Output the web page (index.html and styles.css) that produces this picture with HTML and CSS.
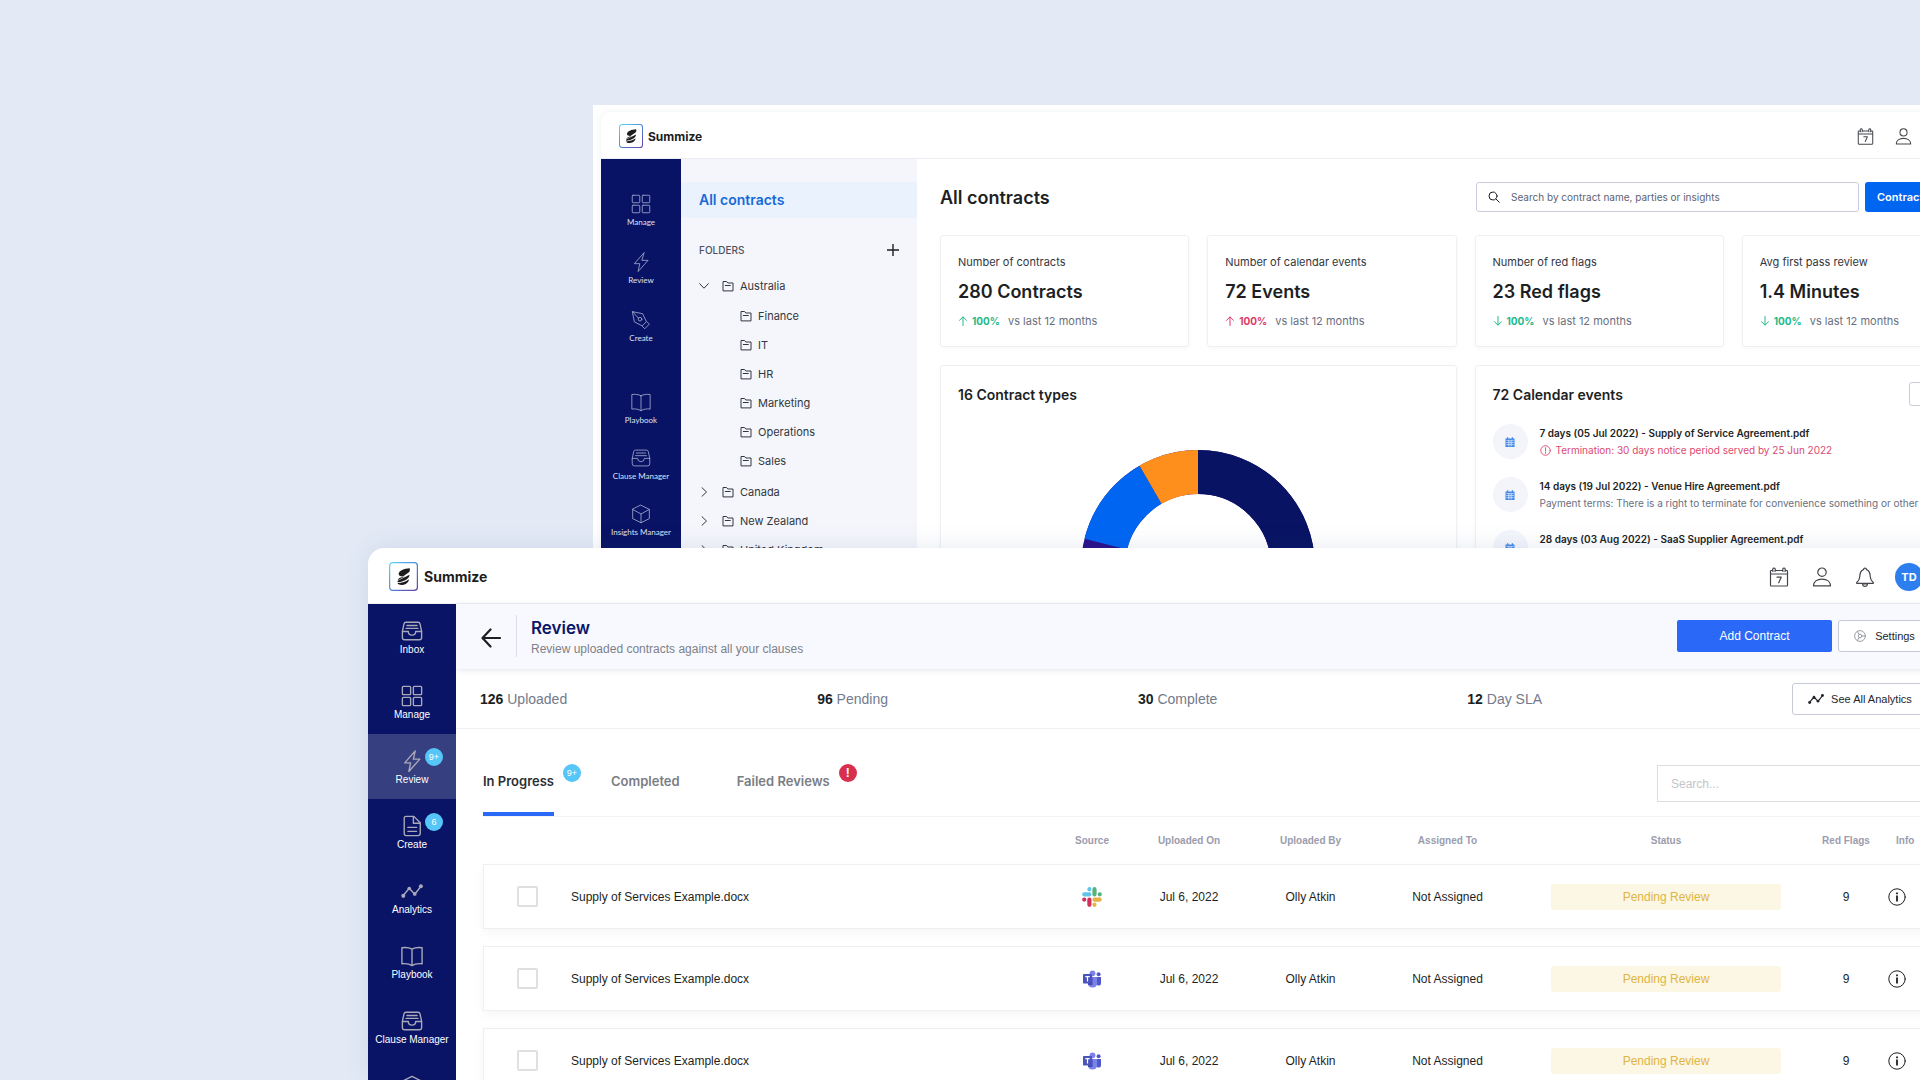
FILE: index.html
```
<!DOCTYPE html>
<html lang="en">
<head>
<meta charset="utf-8">
<title>Summize</title>
<link rel="stylesheet" href="styles.css">
</head>
<body>
<svg class="sprite" aria-hidden="true">
  <defs>
    <linearGradient id="brand" x1="0" y1="0" x2="1" y2="1">
      <stop offset="0" stop-color="#5fd8f5"/><stop offset=".5" stop-color="#4a8ad8"/><stop offset="1" stop-color="#6a3fa8"/>
    </linearGradient>
    <symbol id="i-logo" viewBox="0 0 28 28">
      <rect x=".6" y=".6" width="26.8" height="26.8" rx="3" fill="#fff" stroke="url(#brand)" stroke-width="1.2"/>
      <path fill="#1d1d1d" d="M20 6C14.500 6.300 9.800 8.200 9.300 11.400C9.100 13.300 11 13.900 13.400 14.100L19.600 9.600C20.200 8.800 20.300 7.300 20 6ZM19.900 12.200L8.400 18.200C8.200 18.800 8.200 19.300 8.400 19.600C12.500 19 19.600 17.200 19.900 12.200ZM14.500 14.300C11.500 14.700 8.900 15.600 8.500 17.600L15.800 13.800ZM19.300 16.700C16.800 18.900 12.500 20.200 8.200 20.300C8.800 21.700 10.600 22.300 12.800 22.200C16 22 19 20 19.300 16.700Z"/>
    </symbol>
    <symbol id="i-grid" viewBox="0 0 24 24"><g class="line"><rect x="1.500" y="1.500" width="9" height="9" rx="1"/><rect x="13.500" y="1.500" width="9" height="9" rx="1"/><rect x="1.500" y="13.500" width="9" height="9" rx="1"/><rect x="13.500" y="13.500" width="9" height="9" rx="1"/></g></symbol>
    <symbol id="i-bolt" viewBox="0 0 24 24"><path class="line" d="M15.500 1L4 14h6.500L8.500 23.500L20.500 10h-7z"/></symbol>
    <symbol id="i-pen" viewBox="0 0 24 24"><g class="line"><path d="M2 2l12 2.500 4.500 9.500-5 5L4.500 14.500z"/><path d="M2 2l7 8"/><circle cx="10.800" cy="11" r="2.200"/><path d="M19 14l3 3-5.500 5.500-3-3"/></g></symbol>
    <symbol id="i-book" viewBox="0 0 24 24"><path class="line" d="M12 4.500C9 2.800 5 2.500 1 3v17.500c4-.6 8 0 11 2 3-2 7-2.600 11-2V3c-4-.5-8-.2-11 1.500zM12 4.500v18"/></symbol>
    <symbol id="i-inbox" viewBox="0 0 24 24"><g class="line"><path d="M1.500 12.500L3.200 4.500Q3.600 2.500 5.500 2.500h13Q20.400 2.500 20.800 4.500l1.700 8V19q0 2.500-2.500 2.500H4Q1.500 21.500 1.500 19zM1.500 12.500H8q0 4 4 4t4-4h6.500"/><path d="M6.500 6h11M5.500 9.200h13"/></g></symbol>
    <symbol id="i-cube" viewBox="0 0 24 24"><path class="line" d="M12 1.500l10 5v11l-10 5-10-5v-11zM2 6.500l10 5.500 10-5.500M12 12v10.500"/></symbol>
    <symbol id="i-doc" viewBox="0 0 24 24"><path class="line" d="M5.500 1.500h8.500l7 7V20q0 2.500-2.500 2.500h-13Q3.500 22.500 3.500 20V3.500q0-2 2-2zM13.500 1.500V9H21M7.500 13.500h9.500M7.500 17.800h9.500"/></symbol>
    <symbol id="i-trend" viewBox="0 0 24 24"><path class="line" d="M2 17.500L9 9l6 6.500 7-9"/><g fill="currentColor"><circle cx="2.500" cy="17.300" r="2.200"/><circle cx="9" cy="9.300" r="2"/><circle cx="15" cy="15.200" r="2"/><circle cx="21.700" cy="6.800" r="2.200"/></g></symbol>
    <symbol id="i-calendar" viewBox="0 0 20 20"><path class="line" d="M3.500 3.500H2.200Q1.500 3.500 1.500 4.200V18.300Q1.500 19 2.200 19H17.800Q18.500 19 18.500 18.300V4.200Q18.500 3.500 17.800 3.500H16.500M6.500 3.500h7M1.500 7h17"/><path class="line" d="M4 4.500q-.8-3.500 1-3.500t1 3.500M14 4.500q-.8-3.500 1-3.500t1 3.500M8 10.200h4.200L9.700 15.800"/></symbol>
    <symbol id="i-user" viewBox="0 0 20 20"><g class="line"><circle cx="10" cy="5.200" r="4.200"/><path d="M1.500 18.800C1.500 14.500 5 12.200 10 12.200s8.500 2.300 8.500 6.600z"/></g></symbol>
    <symbol id="i-bell" viewBox="0 0 20 20"><path class="line" d="M10 1.200q1.400 0 1.500 1.500C15 3.700 15.200 7 15.300 10q.1 3 3 5.500v.8H1.700v-.8q2.900-2.500 3-5.500C4.800 7 5 3.700 8.500 2.700Q8.600 1.200 10 1.200zM7.500 17q.3 2.400 2.500 2.400T12.500 17z"/></symbol>
    <symbol id="i-search" viewBox="0 0 12 12"><g class="line"><circle cx="5" cy="5" r="4"/><path d="M8 8l3.300 3.300"/></g></symbol>
    <symbol id="i-plus" viewBox="0 0 12 12"><path class="line" d="M6 0v12M0 6h12"/></symbol>
    <symbol id="i-down" viewBox="0 0 10 10"><path class="line" d="M.7 2.700L5 7.200l4.300-4.500"/></symbol>
    <symbol id="i-right" viewBox="0 0 10 10"><path class="line" d="M3 .7L7.500 5 3 9.300"/></symbol>
    <symbol id="i-folder" viewBox="0 0 12 12"><path class="line" d="M1 10.500V1.500h3.600l1.200 1.500H11v7.500zM3.300 5.500h5"/></symbol>
    <symbol id="i-up" viewBox="0 0 10 10"><path class="line" d="M5 9.500V1M1.500 4.300L5 .9l3.500 3.400"/></symbol>
    <symbol id="i-drop" viewBox="0 0 10 10"><path class="line" d="M5 .5V9M1.500 5.700L5 9.100l3.500-3.400"/></symbol>
    <symbol id="i-sheet" viewBox="0 0 10 10"><path fill="#3f86e8" d="M.5 1.500H2V.2h1.200v1.300h3.600V.2H8v1.300h1.500V10h-9z"/><path stroke="#d9e7fb" stroke-width=".7" d="M1.200 3.400h7.600M1.200 5.500h7.600M1.200 7.600h7.600M3.400 3.400v6M5 3.400v6M6.700 3.400v6"/></symbol>
    <symbol id="i-alert" viewBox="0 0 12 12"><g class="line"><circle cx="6" cy="6" r="5.200"/><path d="M6 3v3.700M6 8v1"/></g></symbol>
    <symbol id="i-back" viewBox="0 0 20 20"><path class="line" d="M19 10H1.800M9.500 1.500L1.500 10l8 8.500"/></symbol>
    <symbol id="i-gear" viewBox="0 0 14 14"><g class="line"><circle cx="7" cy="7" r="5.400"/><circle cx="7" cy="7" r="1.800"/><path d="M8.800 7h3.600M6.100 8.600L4.300 11.700M6.100 5.400L4.300 2.300"/></g></symbol>
    <symbol id="i-info" viewBox="0 0 18 18"><circle class="line" cx="9" cy="9" r="8.200"/><path fill="none" stroke="currentColor" stroke-width="1.800" d="M9 4.500v1.800M9 7.500v6"/></symbol>
    <symbol id="i-slack" viewBox="0 0 20 20" stroke-width="4.200" stroke-linecap="round">
      <path stroke="#61c5ea" d="M2.200 7.300h5.200M7.400 2.200v.1"/><path stroke="#56b37f" d="M12.500 2.200v5.200M17.700 7.300h.1"/><path stroke="#e5b345" d="M12.500 12.600h5.200M12.500 17.700v.1"/><path stroke="#d3315c" d="M7.400 12.600v5.200M2.200 12.600h.1"/>
    </symbol>
    <symbol id="i-teams" viewBox="0 0 20 18"><circle cx="10.500" cy="3.300" r="2.900" fill="#7b83eb"/><circle cx="16.600" cy="4.200" r="2" fill="#5059c9"/><path fill="#5059c9" d="M14 7h5v6q0 2.600-2.500 2.600T14 13.500z"/><path fill="#7b83eb" d="M6 7h9v6.500q0 4-4.500 4T6 13.500z"/><path fill="#4148ae" d="M5 7h5.500v8H6.200z"/><rect x="1" y="4" width="9" height="9.500" rx=".8" fill="#4b53bc"/><path stroke="#fff" stroke-width="1.200" d="M3.300 6.600h4.400M5.500 6.600v4.900"/></symbol>
  </defs>
</svg>

<div class="window window-back">
  <div class="frame">
    <header class="topbar">
      <a class="brand" href="#"><svg><use href="#i-logo"/></svg>Summize</a>
      <div class="tools">
        <button aria-label="Calendar"><svg><use href="#i-calendar"/></svg></button>
        <button aria-label="Account"><svg><use href="#i-user"/></svg></button>
      </div>
    </header>
    <div class="columns">
      <nav class="rail">
        <div class="rail-group">
          <a href="#"><svg><use href="#i-grid"/></svg>Manage</a>
          <a href="#"><svg><use href="#i-bolt"/></svg>Review</a>
          <a href="#"><svg><use href="#i-pen"/></svg>Create</a>
        </div>
        <div class="rail-group tight">
          <a href="#"><svg><use href="#i-book"/></svg>Playbook</a>
          <a href="#"><svg><use href="#i-inbox"/></svg>Clause Manager</a>
          <a href="#"><svg><use href="#i-cube"/></svg>Insights Manager</a>
        </div>
      </nav>
      <aside class="folders">
        <a class="all" href="#">All contracts</a>
        <div class="folders-head"><h2>Folders</h2><button aria-label="Add folder"><svg><use href="#i-plus"/></svg></button></div>
        <ul class="tree">
          <li><a href="#"><svg class="chev"><use href="#i-down"/></svg><svg><use href="#i-folder"/></svg>Australia</a>
            <ul>
              <li><a href="#"><svg><use href="#i-folder"/></svg>Finance</a></li>
              <li><a href="#"><svg><use href="#i-folder"/></svg>IT</a></li>
              <li><a href="#"><svg><use href="#i-folder"/></svg>HR</a></li>
              <li><a href="#"><svg><use href="#i-folder"/></svg>Marketing</a></li>
              <li><a href="#"><svg><use href="#i-folder"/></svg>Operations</a></li>
              <li><a href="#"><svg><use href="#i-folder"/></svg>Sales</a></li>
            </ul>
          </li>
          <li><a href="#"><svg class="chev"><use href="#i-right"/></svg><svg><use href="#i-folder"/></svg>Canada</a></li>
          <li><a href="#"><svg class="chev"><use href="#i-right"/></svg><svg><use href="#i-folder"/></svg>New Zealand</a></li>
          <li><a href="#"><svg class="chev"><use href="#i-right"/></svg><svg><use href="#i-folder"/></svg>United Kingdom</a></li>
        </ul>
      </aside>
      <main class="dash">
        <div class="dash-head">
          <h1>All contracts</h1>
          <label class="find"><svg><use href="#i-search"/></svg><input type="search" aria-label="Search contracts" placeholder="Search by contract name, parties or insights"></label>
          <button class="primary">Contracts</button>
        </div>
        <div class="cards">
          <section class="card stat"><h3>Number of contracts</h3><strong>280 Contracts</strong><p><svg class="good"><use href="#i-up"/></svg><b class="good">100%</b>vs last 12 months</p></section>
          <section class="card stat"><h3>Number of calendar events</h3><strong>72 Events</strong><p><svg class="bad"><use href="#i-up"/></svg><b class="bad">100%</b>vs last 12 months</p></section>
          <section class="card stat"><h3>Number of red flags</h3><strong>23 Red flags</strong><p><svg class="good"><use href="#i-drop"/></svg><b class="good">100%</b>vs last 12 months</p></section>
          <section class="card stat"><h3>Avg first pass review</h3><strong>1.4 Minutes</strong><p><svg class="good"><use href="#i-drop"/></svg><b class="good">100%</b>vs last 12 months</p></section>
          <section class="card wide">
            <div class="card-head"><h2>16 Contract types</h2></div>
            <svg class="donut" viewBox="0 0 234 234" role="img" aria-label="Contract types">
              <g fill="none" stroke-width="44" transform="rotate(-90 117 117)">
                <circle cx="117" cy="117" r="95" pathLength="360" stroke="#2a118a"/>
                <circle cx="117" cy="117" r="95" pathLength="360" stroke="#081463" stroke-dasharray="150 210"/>
                <circle cx="117" cy="117" r="95" pathLength="360" stroke="#0066f2" stroke-dasharray="46 314" stroke-dashoffset="-284"/>
                <circle cx="117" cy="117" r="95" pathLength="360" stroke="#ff8f1c" stroke-dasharray="30 330" stroke-dashoffset="-330"/>
              </g>
            </svg>
          </section>
          <section class="card wide">
            <div class="card-head"><h2>72 Calendar events</h2><button aria-label="View all"></button></div>
            <ul class="events">
              <li><span class="dot"><svg><use href="#i-sheet"/></svg></span><div><b>7 days (05 Jul 2022) - Supply of Service Agreement.pdf</b><p class="warn"><svg><use href="#i-alert"/></svg>Termination: 30 days notice period served by 25 Jun 2022</p></div></li>
              <li><span class="dot"><svg><use href="#i-sheet"/></svg></span><div><b>14 days (19 Jul 2022) - Venue Hire Agreement.pdf</b><p>Payment terms: There is a right to terminate for convenience something or other</p></div></li>
              <li><span class="dot"><svg><use href="#i-sheet"/></svg></span><div><b>28 days (03 Aug 2022) - SaaS Supplier Agreement.pdf</b></div></li>
            </ul>
          </section>
        </div>
      </main>
    </div>
  </div>
</div>

<div class="window window-front">
  <header class="topbar">
    <a class="brand" href="#"><svg><use href="#i-logo"/></svg>Summize</a>
    <div class="tools">
      <button aria-label="Calendar"><svg><use href="#i-calendar"/></svg></button>
      <button aria-label="Account"><svg><use href="#i-user"/></svg></button>
      <button aria-label="Notifications"><svg><use href="#i-bell"/></svg></button>
      <button class="avatar">TD</button>
    </div>
  </header>
  <div class="columns">
    <nav class="side">
      <a href="#"><svg><use href="#i-inbox"/></svg>Inbox</a>
      <a href="#"><svg><use href="#i-grid"/></svg>Manage</a>
      <a class="active" href="#"><svg><use href="#i-bolt"/></svg>Review<span class="badge">9+</span></a>
      <a href="#"><svg><use href="#i-doc"/></svg>Create<span class="badge">6</span></a>
      <a href="#"><svg><use href="#i-trend"/></svg>Analytics</a>
      <a href="#"><svg><use href="#i-book"/></svg>Playbook</a>
      <a href="#"><svg><use href="#i-inbox"/></svg>Clause Manager</a>
      <a href="#" aria-label="Insights Manager"><svg><use href="#i-cube"/></svg></a>
    </nav>
    <main class="review">
      <div class="page-head">
        <a class="back" href="#" aria-label="Back"><svg><use href="#i-back"/></svg></a>
        <div class="heading"><h1>Review</h1><p>Review uploaded contracts against all your clauses</p></div>
        <button class="add">Add Contract</button>
        <button class="plain settings"><svg><use href="#i-gear"/></svg>Settings</button>
      </div>
      <div class="totals">
        <p><b>126</b> Uploaded</p>
        <p><b>96</b> Pending</p>
        <p><b>30</b> Complete</p>
        <p><b>12</b> Day SLA</p>
        <button class="plain analytics"><svg><use href="#i-trend"/></svg>See All Analytics</button>
      </div>
      <div class="list">
        <div class="bar">
          <div class="tabs">
            <button class="tab current">In Progress<span class="badge">9+</span></button>
            <button class="tab">Completed</button>
            <button class="tab">Failed Reviews<span class="badge red">!</span></button>
          </div>
          <input class="filter" type="search" aria-label="Search reviews" placeholder="Search...">
        </div>
        <table>
          <colgroup><col class="c-check"><col><col class="c-source"><col class="c-on"><col class="c-by"><col class="c-to"><col class="c-status"><col class="c-flags"><col class="c-info"></colgroup>
          <thead><tr><th></th><th></th><th>Source</th><th>Uploaded On</th><th>Uploaded By</th><th>Assigned To</th><th>Status</th><th>Red Flags</th><th class="info">Info</th></tr></thead>
          <tbody>
            <tr><td class="check"><input type="checkbox" aria-label="Select row 1"></td><td class="name">Supply of Services Example.docx</td><td><svg class="src"><use href="#i-slack"/></svg></td><td>Jul 6, 2022</td><td>Olly Atkin</td><td>Not Assigned</td><td><span class="status">Pending Review</span></td><td>9</td><td class="info"><button aria-label="Info"><svg><use href="#i-info"/></svg></button></td></tr>
            <tr><td class="check"><input type="checkbox" aria-label="Select row 2"></td><td class="name">Supply of Services Example.docx</td><td><svg class="src"><use href="#i-teams"/></svg></td><td>Jul 6, 2022</td><td>Olly Atkin</td><td>Not Assigned</td><td><span class="status">Pending Review</span></td><td>9</td><td class="info"><button aria-label="Info"><svg><use href="#i-info"/></svg></button></td></tr>
            <tr><td class="check"><input type="checkbox" aria-label="Select row 3"></td><td class="name">Supply of Services Example.docx</td><td><svg class="src"><use href="#i-teams"/></svg></td><td>Jul 6, 2022</td><td>Olly Atkin</td><td>Not Assigned</td><td><span class="status">Pending Review</span></td><td>9</td><td class="info"><button aria-label="Info"><svg><use href="#i-info"/></svg></button></td></tr>
          </tbody>
        </table>
      </div>
    </main>
  </div>
</div>
</body>
</html>
```
FILE: styles.css
```
* { box-sizing: border-box; margin: 0; padding: 0; }
html { height: 100%; }
body {
  position: relative;
  min-height: 100%;
  overflow: hidden;
  background: #e3eaf6;
  color: #1d1f24;
  font-family: Inter, "Liberation Sans", sans-serif;
}
.sprite { position: absolute; width: 0; height: 0; }
a { color: inherit; text-decoration: none; }
ul { list-style: none; }
button { border: 0; background: none; font: inherit; color: inherit; cursor: pointer; }
input { font: inherit; color: inherit; outline: 0; }
svg { display: block; flex: none; stroke-width: 1; }
.line { fill: none; stroke: currentColor; stroke-linejoin: round; stroke-linecap: round; }

/* Windows stacked on the canvas; both run off the right edge */
.window { position: absolute; display: flex; flex-direction: column; background: #fff; }
.window-back { left: 593px; right: -95px; top: 105px; bottom: 0; padding: 7px 0 0 8px; }
.window-front {
  left: 368px; right: -36px; top: 548px; bottom: 0;
  overflow: hidden;
  border-radius: 16px 0 0 0;
  box-shadow: 0 0 24px rgba(60, 80, 140, .12);
  font-family: "Liberation Sans", Arial, sans-serif;
}
.frame { flex: 1; display: flex; flex-direction: column; min-height: 0; overflow: hidden; border-radius: 10px 0 0 0; box-shadow: 0 0 6px rgba(40, 60, 110, .08); }
.columns { flex: 1; display: flex; min-height: 0; }

.topbar { display: flex; align-items: center; justify-content: space-between; }
.brand { display: flex; align-items: center; font-family: Inter, sans-serif; font-weight: 700; color: #1d1d1d; }
.tools { display: flex; align-items: center; color: #44464c; }
.tools svg { stroke-width: 1.2; }
.tools button { display: flex; align-items: center; justify-content: center; }

/* Dashboard window */
.window-back .topbar { height: 47px; padding: 2px 99px 0 18px; border-bottom: 1px solid #ebedf2; }
.window-back .brand { gap: 5px; font-size: 12px; }
.window-back .brand svg { width: 24px; height: 24px; }
.window-back .tools { gap: 12px; }
.window-back .tools button { width: 26px; }
.window-back .tools svg { width: 17px; height: 17px; }

.rail { width: 80px; flex: none; padding-top: 35px; background: #081365; color: #dfe2f2; font: 8px/12px Lato, sans-serif; }
.rail-group { display: flex; flex-direction: column; gap: 24px; }
.rail-group.tight { gap: 22px; margin-top: 48px; }
.rail a { display: flex; flex-direction: column; align-items: center; gap: 2px; height: 34px; white-space: nowrap; }
.rail svg { width: 20px; height: 20px; color: #a3a9cd; }

.folders { width: 236px; flex: none; padding-top: 23px; background: #f4f6fb; font-size: 11px; }
.all { display: block; padding: 0 18px; background: #eaf3fd; color: #1769d8; font-size: 14px; font-weight: 600; line-height: 36px; }
.folders-head { display: flex; align-items: center; justify-content: space-between; padding: 24px 18px 13px; line-height: 16px; }
.folders-head h2 { color: #4c5263; font-size: 10px; font-weight: 500; text-transform: uppercase; }
.folders-head svg { width: 12px; height: 12px; stroke-width: 1.4; }
.tree { padding: 0 18px; color: #33363d; }
.tree a { display: flex; align-items: center; gap: 6px; height: 29px; }
.tree svg { width: 12px; height: 12px; }
.tree .chev { width: 10px; height: 10px; margin-right: 7px; }
.tree ul { padding: 1px 0 2px 41px; }

.dash { flex: 1; min-width: 0; padding: 23px 24px 0 23px; }
.dash-head { display: flex; align-items: center; height: 30px; }
.dash-head h1 { flex: 1; font-size: 18px; font-weight: 600; }
.find { display: flex; align-items: center; gap: 11px; width: 383px; height: 30px; padding: 0 11px; border: 1px solid #c9ccda; border-radius: 3px; font-size: 10px; }
.find svg { width: 12px; height: 12px; }
.find input { flex: 1; border: 0; background: none; }
.find input::placeholder { color: #5d6373; opacity: 1; }
.primary { width: 126px; height: 30px; margin-left: 6px; padding: 0 12px; border-radius: 3px; background: #0066f2; color: #fff; font-size: 11px; font-weight: 600; text-align: left; }
.cards { display: grid; grid-template-columns: repeat(4, 1fr); gap: 18px; margin-top: 23px; }
.card { border: 1px solid #eef0f4; border-radius: 3px; background: #fff; box-shadow: 0 1px 4px rgba(30, 40, 80, .04); }
.stat { height: 112px; padding: 17px; }
.stat h3 { font-size: 11px; font-weight: 400; line-height: 18px; color: #33363d; }
.stat strong { display: block; margin-top: 9px; font-size: 18px; font-weight: 600; line-height: 24px; }
.stat p { display: flex; align-items: center; margin-top: 8px; font-size: 11px; line-height: 18px; color: #6a7080; }
.stat p svg { width: 10px; height: 10px; margin-right: 4px; }
.stat p b { margin-right: 8px; font-size: 10px; font-weight: 700; }
.good { color: #23b98a; }
.bad { color: #dd3b64; }
.wide { grid-column: span 2; height: 420px; padding: 16px 17px; }
.card-head { display: flex; align-items: center; justify-content: space-between; height: 24px; }
.card-head h2 { font-size: 14px; font-weight: 600; }
.card-head button { width: 64px; height: 24px; border: 1px solid #c9ccda; border-radius: 3px; }
.donut { width: 234px; height: 234px; margin: 44px auto 0; }
.events { display: flex; flex-direction: column; gap: 18px; margin-top: 18px; }
.events li { display: flex; gap: 12px; height: 35px; }
.events b { display: block; font-size: 10px; font-weight: 600; line-height: 18px; white-space: nowrap; }
.events p { display: flex; align-items: center; gap: 5px; font-size: 10px; line-height: 17px; color: #6a7080; white-space: nowrap; }
.events .warn { color: #dd4a70; }
.events p svg { width: 11px; height: 11px; }
.dot { display: flex; align-items: center; justify-content: center; width: 35px; height: 35px; flex: none; border-radius: 50%; background: #f3f5fb; }
.dot svg { width: 10px; height: 10px; }

/* Review window */
.window-front .topbar { height: 56px; flex: none; padding: 2px 33px 0 21px; border-bottom: 1px solid #eff1f6; }
.window-front .brand { gap: 6px; font-size: 14px; }
.window-front .brand svg { width: 29px; height: 29px; }
.window-front .tools { gap: 17px; }
.window-front .tools button { width: 26px; }
.window-front .tools svg { width: 20px; height: 20px; }
.window-front .tools .avatar { width: 28px; height: 28px; border-radius: 50%; background: #2d7ff0; color: #fff; font: 700 11px/28px Inter, sans-serif; }

.side { width: 88px; flex: none; background: #0a1466; color: #fff; font-size: 10px; line-height: 14px; }
.side a { position: relative; display: flex; flex-direction: column; align-items: center; height: 65px; padding-top: 16px; }
.side svg { width: 22px; height: 22px; margin-bottom: 1px; color: #a9a9b8; stroke-width: 1.5; }
.side .active { background: #363f80; }
.badge { position: absolute; width: 18px; height: 18px; border-radius: 50%; background: #56c5f7; color: #fff; font: 9px/18px "Liberation Sans", sans-serif; text-align: center; }
.side .badge { left: 57px; top: 14px; }
.badge.red { background: #d92f4f; font-weight: 700; font-size: 12px; }

.review { flex: 1; min-width: 0; }
.page-head { display: flex; align-items: center; height: 65px; padding: 0 26px 1px 25px; background: #f8f9fe; box-shadow: 0 1px 6px rgba(20, 30, 60, .12); }
.back { padding: 13px 15px 9px 0; border-right: 1px solid #dddfe6; color: #1d1f24; }
.back svg { width: 20px; height: 20px; stroke-width: 2.2; }
.heading { flex: 1; padding: 4px 0 0 14px; }
.heading h1 { color: #0b1668; font: 600 17px/22px Inter, sans-serif; }
.heading p { color: #7d8088; font-size: 12px; line-height: 20px; }
.add { width: 155px; height: 32px; border-radius: 2px; background: #2a68f8; color: #fff; font-size: 12px; }
.plain { display: flex; align-items: center; justify-content: center; height: 32px; border: 1px solid #c6cad8; border-radius: 3px; background: #fff; color: #24262b; font-size: 11px; }
.settings { gap: 8px; width: 92px; margin-left: 6px; }
.settings svg { width: 14px; height: 14px; color: #9b9ea6; }
.analytics { gap: 7px; width: 138px; padding-right: 2px; }
.analytics svg { width: 16px; height: 16px; stroke-width: 1.8; }
.totals { display: flex; align-items: center; justify-content: space-between; height: 60px; padding: 1px 26px 0 24px; border-bottom: 1px solid #eff0f4; font-size: 14px; }
.totals p { color: #737a8c; }
.totals b { color: #1d1f24; }

.list { padding: 0 24px 0 27px; }
.bar { display: flex; justify-content: space-between; height: 88px; border-bottom: 1px solid #f2f3f5; }
.tabs { display: flex; gap: 57px; }
.tab { position: relative; padding-top: 21px; border-bottom: 4px solid transparent; color: #7b7d84; font: 600 13px/20px Inter, sans-serif; }
.tab.current { border-color: #2a68f8; color: #2c2e33; }
.tab .badge { left: 100%; top: 35px; margin-left: 9px; }
.filter { width: 275px; height: 37px; margin-top: 36px; padding: 0 13px; border: 1px solid #dcdee2; background: #fff; font-size: 12px; }
.filter::placeholder { color: #c3c5ca; opacity: 1; }

table { width: 100%; table-layout: fixed; border-collapse: separate; border-spacing: 0 17px; font-size: 12px; text-align: center; }
.c-check { width: 88px; }
.c-source { width: 98px; }
.c-on { width: 96px; }
.c-by { width: 147px; }
.c-to { width: 127px; }
.c-status { width: 310px; }
.c-flags { width: 50px; }
.c-info { width: 61px; }
th { color: #9a9cae; font-size: 10px; font-weight: 700; line-height: 13px; white-space: nowrap; }
th.info { padding-left: 25px; text-align: left; }
tbody tr { box-shadow: 0 4px 10px rgba(20, 30, 60, .04); }
td { height: 65px; border: solid #eeeff2; border-width: 1px 0; background: #fff; white-space: nowrap; }
td:first-child { border-left-width: 1px; }
td.name { text-align: left; }
td.check { padding-left: 33px; text-align: left; }
.check input { display: block; appearance: none; width: 21px; height: 21px; border: 2px solid #e0e0e2; border-radius: 2px; background: #fff; }
.src { width: 20px; height: 20px; margin: 0 auto; }
.status { display: block; width: 230px; margin: 0 auto; border-radius: 3px; background: #fcf6e4; color: #e0b541; line-height: 26px; }
td.info { padding-left: 17px; text-align: left; }
td.info button { display: block; }
td.info svg { width: 18px; height: 18px; }
```
